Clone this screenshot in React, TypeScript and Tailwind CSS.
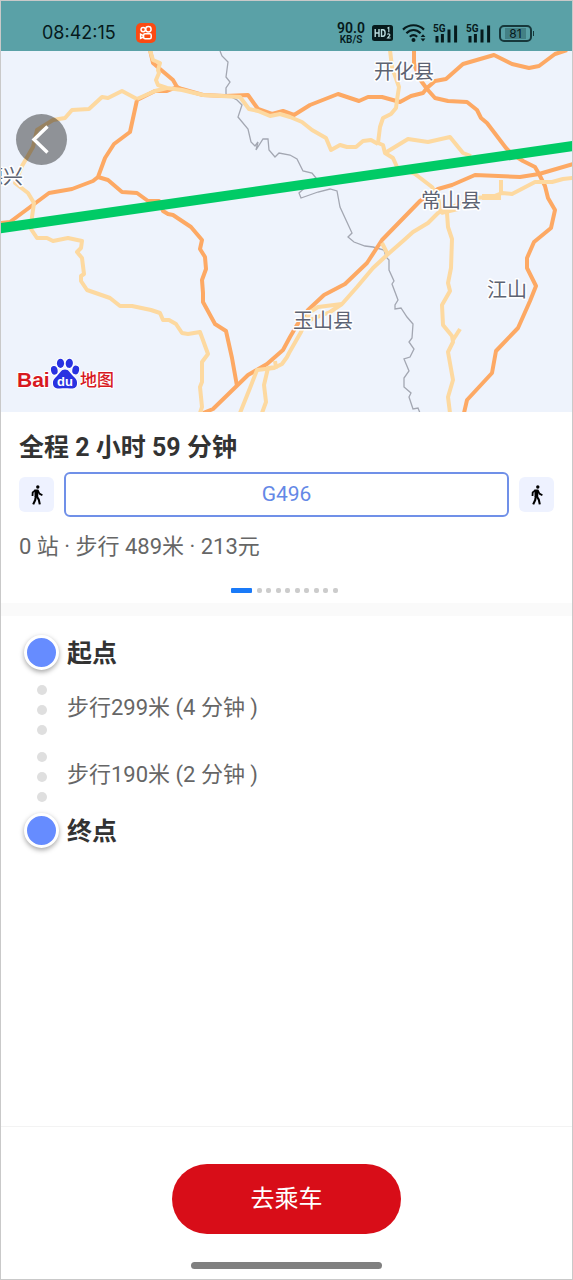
import type { ReactNode } from 'react';

// ============================================================
// Route detail: map preview, plan summary, step list, ride button
// ============================================================

const FONT = "font-[Roboto,'Noto_Sans_CJK_SC',sans-serif]";

// ---------------------------------------------------------------------------
// Map data
// ---------------------------------------------------------------------------

const MINOR_ROADS = [
  'M137 99L122 91L108 98L102 97L89 109L72 110L65 118L53 120L37 130L33 147L22 166L15 183L28 193L34 203L32 217L31 229L37 238L47 238L53 241L68 238L82 241L81 248L77 252L82 258L84 274L81 276L81 281L87 290L110 298L120 306L132 306L151 310L160 313L163 320L169 320L176 324L182 333L188 334L200 332L208 354L202 362L202 382L200 387L202 407L200 413',
  'M137 99L155 91L167 88',
  'M150 50L153 60L160 63L158 70L159 73L156 80L158 85L167 88L182 90L203 95L240 97L249 109L258 111L270 116L280 114L290 117L302 122L312 130L326 138L331 150L340 145L347 147L356 147L363 141L371 140L378 144',
  'M390 50L392 67L399 87L397 100L396 108L391 114L383 118L380 127L378 143L383 145L385 153L393 158L397 167L415 174L432 187L438 197L441 213',
  'M385 153L408 139L428 142L450 137L463 153L471 156',
  'M573 178L563 179L552 182L535 182L512 194L502 193L492 197L472 198L452 207L438 213L428 223L413 232L403 241L387 255L373 268L357 287L342 304L318 307L310 312L301 332L289 353L287 357L282 364L274 368L257 370L250 388L240 413',
  'M342 304L330 312L310 320',
  'M501 180L501 193',
  'M441 213L458 209',
  'M275 361L276 367L268 368L264 385L266 402L262 413',
  'M447 213L448 227L452 239L451 268L448 283L450 291L442 305L443 325L452 336L453 342L448 352L453 380L448 397L450 413',
  'M453 340L460 329',
  'M382 243L388 255',
];

const MAJOR_ROADS = [
  'M0 223L10 222L49 193L72 189L93 181L98 177L105 158L114 144L130 132L137 100L155 91L167 91L177 87L173 80L160 69L153 63L150 50',
  'M177 87L182 89L203 95L225 96L248 95L258 109L272 114L283 111L294 115L310 105L338 94L359 101L368 97L382 97L400 102L411 96L423 93L427 88L435 81L446 79L463 64L494 55L512 64L529 68L539 66L555 54L567 50',
  'M414 50L414 63L419 78L427 89L435 98L448 101L467 102L477 110L481 118L487 123L506 148L512 154L523 161L535 167L539 174L545 186L548 198L555 210L551 228L534 242L527 258L527 268L536 286L530 301L518 328L496 351L492 373L467 400L464 413',
  'M573 164L539 174L520 177L475 175L452 185L438 189L420 201L382 240L367 263L345 284L324 295L308 310L297 325L290 337L283 350L267 364L248 375L213 409L203 413',
  'M98 177L108 180L122 192L137 193L148 201L159 201L163 211L168 214L173 215L191 227L202 240L200 249L205 257L206 269L202 280L203 293L203 302L215 324L226 331L232 358L237 386',
];

const BORDER =
  'M220 51L222 56L228 62L226 77L230 82L226 88L226 94L237 100L242 105L238 117L248 129L251 142L255 146L258 142L256 150L263 139L268 139L269 150L275 157L279 153L290 155L297 159L303 171L312 173L316 178L299 193L301 198L318 192L330 189L337 191L340 207L352 233L348 237L354 242L365 246L373 247L384 250L386 257L389 260L389 270L394 281L392 284L398 300L395 305L395 309L401 308L407 317L413 324L412 338L409 342L414 349L410 357L404 359L409 371L404 378L404 387L411 393L409 397L413 409L418 408L420 413';

const TOWNS = [
  { name: '开化县', x: 404, y: 79 },
  { name: '常山县', x: 451, y: 208 },
  { name: '玉山县', x: 323, y: 328 },
  { name: '江山', x: 507, y: 297 },
  { name: '德兴', x: 3, y: 184 },
];

const STEPS = [
  { meters: 299, minutes: 4 },
  { meters: 190, minutes: 2 },
];

// ---------------------------------------------------------------------------
// Status bar
// ---------------------------------------------------------------------------

function AppGlyph() {
  return (
    <svg viewBox="0 0 20 20" className="size-5" aria-hidden="true">
      <rect width="20" height="20" rx="5" fill="#fb4a12" />
      <g fill="none" stroke="#fff" strokeWidth="1.5">
        <circle cx="7.2" cy="6.6" r="2.2" />
        <circle cx="12.4" cy="6.2" r="2.7" />
        <rect x="7.6" y="10.8" width="7.6" height="5" rx="1.5" />
        <path d="M7.4 12.6L4.6 11.2V15.4L7.4 14" />
      </g>
    </svg>
  );
}

function HdBadge() {
  return (
    <svg viewBox="0 0 21 16" className="h-4 w-[21px]" aria-hidden="true">
      <rect width="21" height="16" rx="2.5" fill="#061a1c" />
      <g fill="none" stroke="#b9dcde" strokeWidth="1.4">
        <path d="M3.2 4V12M7 4V12M3.2 8H7" />
        <path d="M9.5 4.7H11C13.8 4.7 13.8 11.3 11 11.3H9.5Z" />
        <path d="M15.4 3.2L16.8 2.4V7.2" strokeWidth="1.1" />
        <path d="M15.4 9.6C16 8.4 18.4 8.8 17.8 10.4L15.6 13H18.6" strokeWidth="1.1" />
      </g>
    </svg>
  );
}

function WifiGlyph() {
  return (
    <svg viewBox="0 0 24 20" className="h-5 w-6" aria-hidden="true">
      <g fill="none" stroke="#061a1c" strokeWidth="2.2">
        <path d="M1 6.6C7 0.8 16 0.8 22 6.6" />
        <path d="M4.4 10.2C8.8 6 14.2 6 18.6 10.2" />
        <path d="M7.8 13.8C10.2 11.6 12.8 11.6 15.2 13.8" />
      </g>
      <circle cx="11.5" cy="17" r="2" fill="#061a1c" />
      <path d="M18.6 14L21 11.2L23.4 14ZM18.6 15.6L21 18.4L23.4 15.6Z" fill="#061a1c" />
    </svg>
  );
}

function SignalGlyph() {
  return (
    <svg viewBox="0 0 26 19" className="h-[19px] w-[26px]" aria-hidden="true">
      <text x="0" y="8" fontSize="10" fontWeight="700" fill="#061a1c">5G</text>
      <path d="M4 12V18.5M9.4 10V18.5M16 5.5V18.5M22.6 1.5V18.5" fill="none" stroke="#061a1c" strokeWidth="3" />
    </svg>
  );
}

function StatusBar() {
  return (
    <header className="flex h-[50px] items-center justify-between bg-[#5aa1a7] pt-[14px] pr-[38px] pl-[41px] text-[#061a1c]">
      <div className="flex items-center gap-5">
        <time className="font-[Inter,sans-serif] text-[18px] leading-5">08:42:15</time>
        <AppGlyph />
      </div>
      <div className="flex items-center gap-[7px]">
        <div className="text-center font-semibold">
          <p className="text-[14px] leading-[13px]">90.0</p>
          <p className="text-[10px] leading-[10px]">KB/S</p>
        </div>
        <HdBadge />
        <div className="flex items-center gap-[7px] pl-[2px]">
          <WifiGlyph />
          <SignalGlyph />
          <SignalGlyph />
        </div>
        <div className="flex items-center gap-px">
          <div className="flex h-[17px] w-[33px] items-center justify-center rounded-[5px] border-2 border-[#17383b]">
            <span className="bg-[#438085] px-1 font-[Inter,sans-serif] text-[12px] leading-[11px]">81</span>
          </div>
          <span className="h-[5px] w-px bg-[#17383b]" />
        </div>
      </div>
    </header>
  );
}

// ---------------------------------------------------------------------------
// Map
// ---------------------------------------------------------------------------

function BaiduLogo() {
  return (
    <g stroke="#fff" strokeWidth="2" strokeLinejoin="round" style={{ paintOrder: 'stroke' }}>
      <g className="font-['Liberation_Sans','Noto_Sans_CJK_SC',sans-serif]" fill="#d7191f">
        <text x="17" y="387" fontSize="21" fontWeight="700">Bai</text>
        <text x="80" y="386" fontSize="17" fontWeight="500">地图</text>
      </g>
      <g fill="#2932e1" style={{ paintOrder: 'stroke' }}>
        <ellipse cx="54.3" cy="370.3" rx="3.3" ry="4.4" transform="rotate(-12 54.3 370.3)" />
        <ellipse cx="60.5" cy="363.3" rx="3.6" ry="4.6" />
        <ellipse cx="69.3" cy="363.3" rx="3.6" ry="4.6" transform="rotate(8 69.3 363.3)" />
        <ellipse cx="75.7" cy="370" rx="3.4" ry="4.4" transform="rotate(12 75.7 370)" />
        <path d="M65 369.5C61 369.5 60 373 57 376C54 378.5 52.5 381 53 384C53.5 388 57 389 60 388.5C63.5 388 66.5 388 70 388.5C74 389 77 387.5 77 383.5C77.5 380 75 378 73 376C70 373 69 369.5 65 369.5Z" />
      </g>
      <text
        x="65"
        y="386"
        fontSize="13"
        fontWeight="700"
        textAnchor="middle"
        fill="#fff"
        stroke="none"
        className="font-['Liberation_Sans',sans-serif]"
      >
        du
      </text>
    </g>
  );
}

function RouteMap() {
  return (
    <section className="relative h-[361px] overflow-hidden bg-[#eef3fc]">
      <svg viewBox="1 51 571 361" preserveAspectRatio="xMidYMid slice" className="size-full">
        <path d={BORDER} fill="none" stroke="#a3a7b2" strokeWidth="1.3" />
        <g fill="none" strokeLinejoin="round" strokeWidth="4">
          {MAJOR_ROADS.map((d) => (
            <path key={d} d={d} stroke="#fda964" />
          ))}
          {MINOR_ROADS.map((d) => (
            <path key={d} d={d} stroke="#fdd9a0" />
          ))}
        </g>
        <path d="M482 197H501" stroke="#fdd9a0" strokeWidth="6" />
        <path d="M-5 229L580 145" stroke="#00cb66" strokeWidth="10" />
        <g
          className="font-['Noto_Sans_CJK_SC',sans-serif]"
          fontSize="20"
          textAnchor="middle"
          fill="#5d6372"
          stroke="#fff"
          strokeWidth="3"
          strokeLinejoin="round"
          style={{ paintOrder: 'stroke' }}
        >
          {TOWNS.map((t) => (
            <text key={t.name} x={t.x} y={t.y}>{t.name}</text>
          ))}
        </g>
        <BaiduLogo />
      </svg>

      <button
        type="button"
        aria-label="返回"
        className="absolute top-[63px] left-[15px] flex size-[51px] items-center justify-center rounded-full bg-black/40"
      >
        <svg viewBox="0 0 51 51" className="size-full" aria-hidden="true">
          <path d="M31.5 12.5L18 25.5L31.5 38.5" fill="none" stroke="#fff" strokeWidth="3.4" />
        </svg>
      </button>
    </section>
  );
}

// ---------------------------------------------------------------------------
// Plan summary
// ---------------------------------------------------------------------------

function WalkBadge() {
  return (
    <span className="flex size-[35px] shrink-0 items-center justify-center rounded-md bg-[#eef2ff]">
      <svg viewBox="0 0 12 20" className="h-5 w-3" aria-hidden="true">
        <circle cx="6.8" cy="2" r="1.7" />
        <path d="M3.4 4.6H7.4L7.2 12H3.6Z" />
        <g fill="none" stroke="#000" strokeWidth="1.8" strokeLinejoin="round">
          <path d="M4.2 5.4L1.7 7.4L1.5 11" />
          <path d="M6.8 5.4L8.4 8.6L11.4 10.2" />
          <path d="M4.8 11.5L4.2 15L2.2 19.4" strokeWidth="2.1" />
          <path d="M5.8 11.5L7.8 14.6L8.8 19.4" strokeWidth="2.1" />
        </g>
      </svg>
    </span>
  );
}

function PlanSummary() {
  return (
    <section className="bg-white px-[18px] pt-[18px] pb-[10px]">
      <h1 className="text-[25px] leading-9 font-bold text-[#333]">全程 2 小时 59 分钟</h1>
      <div className="mt-[6px] flex items-center gap-[10px]">
        <WalkBadge />
        <button
          type="button"
          className="h-[45px] flex-1 rounded-md border-2 border-[#7090e8] text-[21px] text-[#6488e6]"
        >
          G496
        </button>
        <WalkBadge />
      </div>
      <p className="mt-[14px] text-[22px] leading-8 text-[#666]">0 站 · 步行 489米 · 213元</p>
      <div className="mt-[25px] flex justify-center pr-1">
        <div className="flex w-[107px] justify-between">
          <span className="h-[5px] w-[21px] rounded-[1px] bg-[#1a7af8]" />
          {Array.from({ length: 9 }, (_, i) => (
            <span key={i} className="size-[5px] rounded-[2px] bg-[#ccc]" />
          ))}
        </div>
      </div>
    </section>
  );
}

// ---------------------------------------------------------------------------
// Steps
// ---------------------------------------------------------------------------

function Endpoint({ children }: { children: ReactNode }) {
  return (
    <li className="flex items-center gap-2">
      <span className="size-[35px] rounded-full border-[3px] border-white bg-[#668cff] shadow-[0_2px_5px_rgba(0,0,0,0.35)]" />
      <span className="pt-1 text-[25px] leading-8 font-bold text-[#333]">{children}</span>
    </li>
  );
}

function WalkStep({ meters, minutes }: { meters: number; minutes: number }) {
  return (
    <li className="flex h-[67px] gap-2">
      <span className="flex w-[35px] flex-col items-center gap-[10px] pt-[11px]">
        <i className="size-[10px] rounded-full bg-[#dfdfdf]" />
        <i className="size-[10px] rounded-full bg-[#dfdfdf]" />
        <i className="size-[10px] rounded-full bg-[#dfdfdf]" />
      </span>
      <span className="pt-[18px] text-[22px] leading-8 text-[#666]">
        {`步行${meters}米 (${minutes} 分钟 )`}
      </span>
    </li>
  );
}

// ---------------------------------------------------------------------------
// Page
// ---------------------------------------------------------------------------

export default function App() {
  return (
    <div className={`flex min-h-screen flex-col border border-[#c9c9c9] bg-white ${FONT}`}>
      <StatusBar />
      <RouteMap />
      <PlanSummary />
      <div className="h-[13px] bg-[#fafafa]" />

      <main className="flex-1 px-[23px] py-[18px]">
        <ol>
          <Endpoint>起点</Endpoint>
          <li className="h-1" aria-hidden="true" />
          {STEPS.map((s) => (
            <WalkStep key={s.meters} meters={s.meters} minutes={s.minutes} />
          ))}
          <li className="h-1" aria-hidden="true" />
          <Endpoint>终点</Endpoint>
        </ol>
      </main>

      <footer className="flex flex-col items-center border-t border-[#f3f3f3] pt-[37px] pb-[10px]">
        <button type="button" className="h-[70px] w-2/5 rounded-full bg-[#d80d18] text-[24px] text-white">
          去乘车
        </button>
        <div className="mt-7 h-[7px] w-1/3 rounded-full bg-[#808080]" />
      </footer>
    </div>
  );
}
